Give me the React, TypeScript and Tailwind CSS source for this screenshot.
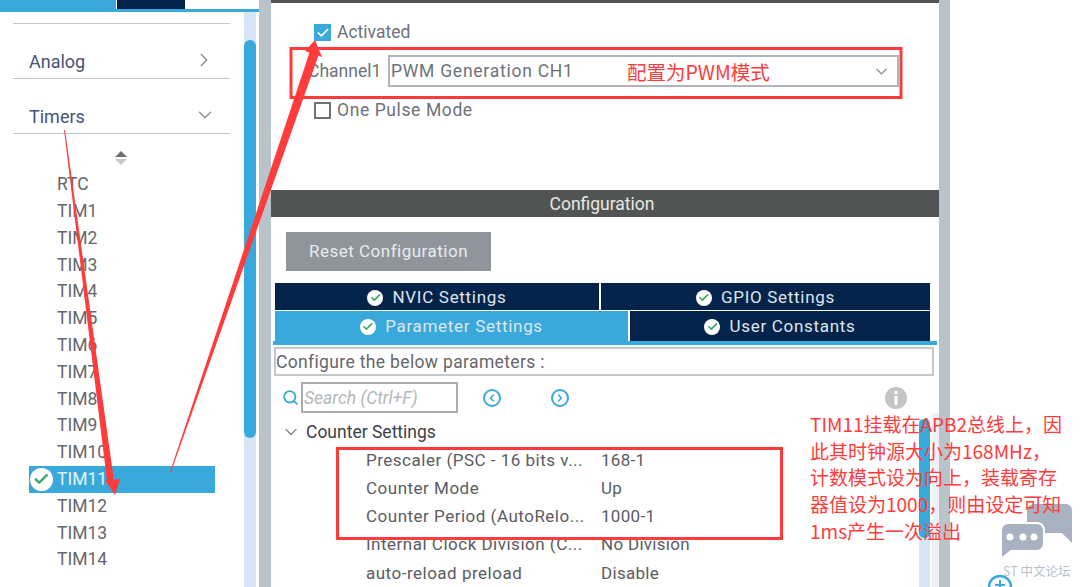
import { ChevronDown, ChevronLeft, ChevronRight, Check, Search } from "lucide-react";

const timers = ["RTC", "TIM1", "TIM2", "TIM3", "TIM4", "TIM5", "TIM6", "TIM7", "TIM8", "TIM9", "TIM10", "TIM11", "TIM12", "TIM13", "TIM14"];

const params = [
  { label: "Prescaler (PSC - 16 bits v...", value: "168-1" },
  { label: "Counter Mode", value: "Up" },
  { label: "Counter Period (AutoRelo...", value: "1000-1" },
  { label: "Internal Clock Division (C...", value: "No Division" },
  { label: "auto-reload preload", value: "Disable" },
];

const note = ["TIM11挂载在APB2总线上，因", "此其时钟源大小为168MHz，", "计数模式设为向上，装载寄存", "器值设为1000，则由设定可知", "1ms产生一次溢出"];

function OkIcon({ size = 16 }: { size?: number }) {
  return (
    <span className="flex shrink-0 items-center justify-center rounded-full bg-white" style={{ width: size, height: size }}>
      <Check size={size * 0.72} strokeWidth={3.5} className="text-[#3fa968]" />
    </span>
  );
}

function TabButton({ label, active, className }: { label: string; active?: boolean; className: string }) {
  return (
    <div className={`flex items-center justify-center gap-[9px] pt-[2px] text-[17px] tracking-[0.7px] text-[#dfe6ee] ${active ? "bg-[#39a9dc]" : "bg-[#03234b]"} ${className}`}>
      <OkIcon />
      {label}
    </div>
  );
}

function Sidebar() {
  return (
    <aside className="flex w-[259px] shrink-0 flex-col bg-white">
      <div className="flex h-[9px] shrink-0">
        <div className="w-[116px] bg-[#39a9dc]" />
        <div className="ml-px w-[68px] bg-[#03234b]" />
      </div>
      <div className="h-[3px] shrink-0 bg-[#39a9dc]" />
      <div className="flex min-h-0 flex-1">
        <div className="w-[244px] shrink-0 pl-[13px]">
          <div className="mt-[11px] h-px w-[217px] bg-[#c0c8ce]" />
          <div className="flex h-[55px] w-[217px] items-center justify-between border-b border-[#c0c8ce] pl-4 pr-[15px] pt-[20px] text-[18px] text-[#46527a]">
            Analog
            <ChevronRight size={22} strokeWidth={1.5} className="mb-[3px] text-[#8a8f94]" />
          </div>
          <div className="flex h-[55px] w-[217px] items-center justify-between border-b border-[#c0c8ce] pl-4 pr-[14px] pt-[20px] text-[18px] text-[#46527a]">
            Timers
            <ChevronDown size={22} strokeWidth={1.5} className="mb-[3px] text-[#8a8f94]" />
          </div>
          <div className="ml-[102px] mt-[17px] flex h-[14px] w-[12px] flex-col items-center gap-[2px]">
            <div className="h-0 w-0 border-x-[6px] border-b-[6px] border-x-transparent border-b-[#6e6e6e]" />
            <div className="h-0 w-0 border-x-[6px] border-t-[6px] border-x-transparent border-t-[#c8c8c8]" />
          </div>
          <ul className="ml-[16px] mt-[6px] w-[186px]">
            {timers.map((t) => {
              const active = t === "TIM11";
              return (
                <li
                  key={t}
                  className={`relative flex h-[26.8px] items-center pl-[28px] text-[17.5px] ${active ? "bg-[#39a9dc] text-[#e6f3fb]" : "text-[#66666c]"}`}
                >
                  {active && (
                    <span className="absolute left-[1px] top-[2px]">
                      <OkIcon size={23} />
                    </span>
                  )}
                  {t}
                </li>
              );
            })}
          </ul>
        </div>
        <div className="w-[12px] shrink-0 bg-[#d6e6f5] pt-[28px]">
          <div className="h-[398px] rounded-[6px] bg-[#39a9dc]" />
        </div>
      </div>
    </aside>
  );
}

function Main() {
  return (
    <main className="flex w-[668px] shrink-0 flex-col">
      <section className="flex h-[179px] shrink-0 flex-col bg-white">
        <div className="h-[3px] bg-[#525453]" />
        <div className="ml-[43px] mt-[21px] flex h-[17px] items-center gap-[6px] text-[17.5px] text-[#6e7278]">
          <span className="flex h-[17px] w-[17px] items-center justify-center bg-[#39a9dc]">
            <Check size={14} strokeWidth={3} className="text-white" />
          </span>
          Activated
        </div>
        <div className="ml-[37px] mt-[14px] flex h-[32px] items-center text-[17.5px] text-[#6e7278]">
          <span className="w-[80px]">Channel1</span>
          <div className="flex h-[32px] w-[511px] items-center justify-between border-2 border-[#b0b5ba] pl-[1px] pr-[6px] tracking-[0.75px]">
            PWM Generation CH1
            <ChevronDown size={19} strokeWidth={1.7} className="text-[#85888c]" />
          </div>
        </div>
        <div className="ml-[43px] mt-[15px] flex h-[17px] items-center gap-[6px] text-[17.5px] tracking-[0.6px] text-[#6e7278]">
          <span className="h-[17px] w-[17px] border-2 border-[#6e7278]" />
          One Pulse Mode
        </div>
      </section>
      <div className="h-[11px] shrink-0" />
      <section className="flex min-h-0 flex-1 flex-col bg-white">
        <div className="flex h-[27px] shrink-0 items-center justify-center bg-[#525453] pr-[6px] pt-px text-[17.5px] text-[#e8e8e4]">Configuration</div>
        <button className="ml-[15px] mt-[15px] h-[39px] w-[205px] shrink-0 bg-[#8f959b] text-[17px] tracking-[0.5px] text-[#e9ecee]">Reset Configuration</button>
        <div className="ml-[4px] mt-[12px] flex h-[27px] w-[655px] shrink-0 gap-[2px]">
          <TabButton label="NVIC Settings" className="w-[324px]" />
          <TabButton label="GPIO Settings" className="flex-1" />
        </div>
        <div className="ml-[4px] mt-px flex h-[30px] w-[655px] shrink-0 gap-[2px]">
          <TabButton label="Parameter Settings" active className="w-[353px]" />
          <TabButton label="User Constants" className="flex-1" />
        </div>
        <div className="ml-[2px] h-[4px] w-[664px] shrink-0 bg-[#39a9dc]" />
        <div className="ml-[3px] mt-[2px] flex h-[29px] w-[660px] shrink-0 items-center border-2 border-[#c4c8cb] pt-[2px] text-[17.5px] tracking-[0.35px] text-[#66666c]">
          Configure the below parameters :
        </div>
        <div className="mt-[6px] flex h-[31px] shrink-0 items-center pl-[11px]">
          <Search size={17} strokeWidth={2.6} className="text-[#39a9dc]" />
          <div className="ml-[2px] flex h-[31px] w-[157px] items-center border-2 border-[#a9adb0] pl-[1px] pt-[2px] text-[17.5px] italic text-[#b4b7ba]">Search (Ctrl+F)</div>
          <span className="ml-[25px] flex h-[18px] w-[18px] items-center justify-center rounded-full border-2 border-[#39a9dc]">
            <ChevronLeft size={12} strokeWidth={3} className="text-[#39a9dc]" />
          </span>
          <span className="ml-[50px] flex h-[18px] w-[18px] items-center justify-center rounded-full border-2 border-[#39a9dc]">
            <ChevronRight size={12} strokeWidth={3} className="text-[#39a9dc]" />
          </span>
          <svg className="ml-[316px]" width="22" height="22" viewBox="0 0 22 22">
            <circle cx="11" cy="11" r="11" fill="#c4c4c4" />
            <rect x="9.5" y="4" width="3" height="3" fill="#fff" />
            <rect x="9.5" y="9" width="3" height="9" fill="#fff" />
          </svg>
        </div>
        <div className="flex min-h-0 flex-1 overflow-hidden">
          <div className="w-[648px] shrink-0">
            <div className="mt-[6px] flex h-[26px] items-center pl-[10px] text-[17.5px] text-[#3c4048]">
              <ChevronDown size={20} strokeWidth={1.6} className="text-[#85888c]" />
              <span className="ml-[5px]">Counter Settings</span>
            </div>
            <ul className="mt-[1px] text-[17px] text-[#5a5c62]">
              {params.map((p) => (
                <li key={p.label} className="flex h-[28.2px] items-center pl-[95px] pt-px tracking-[0.5px]">
                  <span className="w-[235px] shrink-0 whitespace-nowrap">{p.label}</span>
                  <span className="tracking-[0.3px]">{p.value}</span>
                </li>
              ))}
            </ul>
          </div>
          <div className="mt-[6px] w-[11px] shrink-0 bg-[#d6e6f5]">
            <div className="h-[119px] rounded-[5px] bg-[#39a9dc]" />
          </div>
          <div className="ml-[2px] w-[7px] shrink-0 bg-[#eef2f6]" />
        </div>
      </section>
    </main>
  );
}

export default function App() {
  return (
    <div className="relative flex h-[587px] w-[1080px] overflow-hidden bg-white [font-family:Roboto,'Noto_Sans_CJK_SC',sans-serif]">
      <Sidebar />
      <div className="w-[12px] shrink-0 bg-[#b8c3ca]" />
      <Main />
      <div className="w-[11px] shrink-0 bg-[#b8c3ca]" />

      {/* annotations pasted over the screenshot */}
      <svg className="pointer-events-none absolute left-0 top-0" width="1080" height="587">
        <path d="M64 130 L65 130 L114 481 L107 481 Z" fill="#ff3b3b" />
        <path d="M105 480 L120 479 L115 495 Z" fill="#ff3b3b" />
        <path d="M170 472 L171 472 L319 54 L310 51 Z" fill="#ff3b3b" />
        <path d="M315 40 L322 57 L305 51 Z" fill="#ff3b3b" />
        <rect x="291" y="48.5" width="610" height="49" fill="none" stroke="#ff3b3b" strokeWidth="3" />
        <rect x="337.5" y="448.5" width="444" height="90" fill="none" stroke="#ff3b3b" strokeWidth="3" />
        <path d="M1034 504 h32 a6 6 0 0 1 6 6 v33 l-10 -10 h-28 a7 7 0 0 1 -7 -7 v-15 a7 7 0 0 1 7 -7 z" fill="#a8b2c1" />
        <path d="M1008 523 h29 a7 7 0 0 1 7 7 v14 a7 7 0 0 1 -7 7 h-26 l-10 8 v-29 a7 7 0 0 1 7 -7 z" fill="#a8b2c1" stroke="#fff" strokeWidth="2" />
        <circle cx="1010" cy="537" r="3.5" fill="#fff" />
        <circle cx="1023" cy="537" r="3.5" fill="#fff" />
        <circle cx="1034" cy="537" r="3.5" fill="#fff" />
        <circle cx="1000" cy="587" r="11" fill="#fff" stroke="#39a9dc" strokeWidth="2.5" />
        <path d="M1000 580 v10 M995 585 h10" stroke="#39a9dc" strokeWidth="2" />
      </svg>
      <span className="absolute left-[627px] top-[60px] text-[19.5px] leading-6 text-[#ff3b3b] [font-family:'Noto_Sans_CJK_SC',sans-serif]">配置为PWM模式</span>
      <div className="absolute left-[810px] top-[411px] whitespace-nowrap text-[19px] leading-[26.7px] text-[#ff3b3b] [font-family:'Noto_Sans_CJK_SC',sans-serif]">
        {note.map((line) => (
          <div key={line}>{line}</div>
        ))}
      </div>
      <span className="absolute left-[1003px] top-[563px] text-[12.5px] leading-4 text-[#b8c2cc] [font-family:'Noto_Sans_CJK_SC',sans-serif]">ST 中文论坛</span>
    </div>
  );
}
